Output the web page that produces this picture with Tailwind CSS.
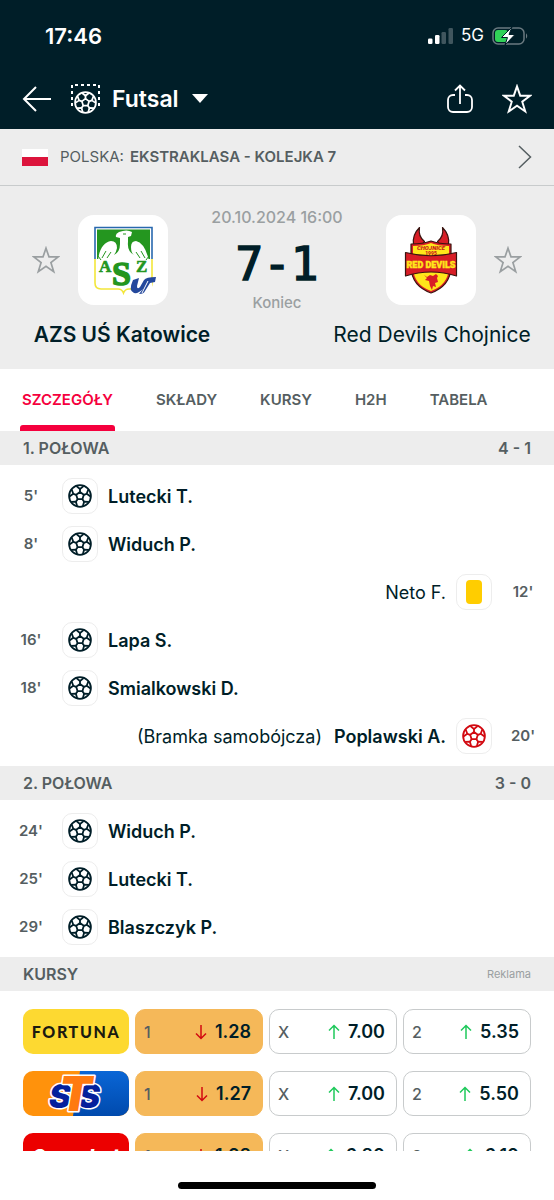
<!DOCTYPE html>
<html lang="pl">

<head>
    <meta charset="UTF-8">
    <meta name="viewport" content="width=device-width, initial-scale=1.0">
    <title>AZS UŚ Katowice - Red Devils Chojnice</title>
    <script src="https://cdn.jsdelivr.net/npm/@tailwindcss/browser@4"></script>
</head>

<body class="h-screen flex flex-col bg-white font-['Inter','Noto_Sans',sans-serif] text-[#001e28]">
    <svg class="hidden">
        <symbol id="ball" viewBox="0 0 24 24" fill="none" stroke="currentColor" stroke-width="1.8" stroke-linejoin="round">
            <circle cx="12" cy="12" r="10.9" />
            <path d="M12 8l3.8 2.8-1.4 4.4H9.6l-1.4-4.4z" />
            <path d="M12 8V5M15.8 10.8l2.9-1M14.4 15.2l1.7 2.5M9.6 15.2l-1.7 2.5M8.2 10.8l-2.9-1" />
            <path d="M8.4 2.1 12 5l3.6-2.9M20.3 5.5l-1.6 4.3 3.8 2.6M20.7 17.9l-4.6-.2-1.2 4.4M9.1 22.1l-1.2-4.4-4.6.2M1.5 12.4l3.8-2.6-1.6-4.3" />
        </symbol>
        <symbol id="star" viewBox="0 0 28 28" fill="none" stroke="currentColor" stroke-linejoin="miter">
            <path d="M14 2.2l3 8.7h9.2l-7.3 5.6 2.8 9.1-7.7-5.4-7.7 5.4 2.8-9.1-7.3-5.6H11z" />
        </symbol>
        <symbol id="up" viewBox="0 0 12 16" fill="none" stroke="currentColor" stroke-width="1.5">
            <path d="M6 15V2M1 6.500l5-5 5 5" />
        </symbol>
        <symbol id="down" viewBox="0 0 12 16" fill="none" stroke="currentColor" stroke-width="1.5">
            <path d="M6 1v13M1 9.500l5 5 5-5" />
        </symbol>
    </svg>

    <header class="shrink-0 bg-[#001e28] text-white">
        <div class="h-[68px] pl-[45px] pr-[26px] pt-1 flex justify-between items-center">
            <span class="text-[22px] font-semibold">17:46</span>
            <div class="flex items-center gap-2">
                <svg class="w-[25px] h-4" viewBox="0 0 25 16" fill="currentColor">
                    <rect x="0" y="10.500" width="4.500" height="5.500" rx="1.300" />
                    <rect x="7" y="7" width="4.500" height="9" rx="1.300" />
                    <rect x="13.500" y="4" width="4.500" height="12" rx="1.300" opacity=".25" />
                    <rect x="20.500" y="0" width="4.500" height="16" rx="1.300" opacity=".25" />
                </svg>
                <span class="text-[17px]">5G</span>
                <svg class="w-9 h-5" viewBox="0 0 36 20">
                    <rect x="1" y="2" width="31" height="16" rx="5" fill="none" stroke="#6a7a80" stroke-width="1.500" />
                    <path d="M34 7.500c1.600.5 1.600 4.500 0 5z" fill="#6a7a80" />
                    <rect x="3" y="4" width="13" height="12" rx="3" fill="#30d158" />
                    <path d="M20 1 9.500 11.500h6L13 19l10-10.500h-6L20 1z" fill="#fff" stroke="#001e28" stroke-width="1" />
                </svg>
            </div>
        </div>
        <nav class="h-[61px] px-[22px] flex items-center">
            <button type="button" aria-label="Wstecz">
                <svg class="w-[30px] h-7" viewBox="0 0 30 28" fill="none" stroke="currentColor" stroke-width="2">
                    <path d="M29 14H2M14 2 2 14l12 12" />
                </svg>
            </button>
            <label for="sport" class="ml-[18px]">
                <svg class="w-[30px] h-[30px]" viewBox="0 0 30 30" role="img" aria-label="Sport">
                    <path d="M2 22V1h27v21" fill="none" stroke="#fff" stroke-width="2" stroke-dasharray="3 3" />
                    <use href="#ball" x="4" y="7" width="23" height="23" color="#fff" />
                </svg>
            </label>
            <select id="sport" class="h-9 ml-3 appearance-none bg-transparent text-[23px] leading-9 font-semibold">
                <option>Futsal</option>
            </select>
            <svg class="w-4 h-[9px] ml-[13px]" viewBox="0 0 16 9" fill="currentColor">
                <path d="M0 0h16L8 9z" />
            </svg>
            <button type="button" aria-label="Udostępnij" class="ml-auto">
                <svg class="w-7 h-[30px]" viewBox="0 0 28 30" fill="none" stroke="currentColor" stroke-width="1.800">
                    <path d="M9 11H7a5 5 0 0 0-5 5v7a5 5 0 0 0 5 5h14a5 5 0 0 0 5-5v-7a5 5 0 0 0-5-5h-2M14 20V2M9 6.500l5-5 5 5" />
                </svg>
            </button>
            <button type="button" aria-label="Dodaj do ulubionych" class="ml-7">
                <svg class="w-[30px] h-[30px]" stroke-width="1.800"><use href="#star" /></svg>
            </button>
        </nav>
    </header>

    <main class="flex-1 min-h-0 overflow-hidden">
        <a href="#" class="h-[57px] px-[22px] flex items-center bg-[#ededed] border-b border-[#c8cbcc] text-[15px] text-[#555e61]">
            <span class="w-[26px] h-[17px] mr-3 bg-[linear-gradient(#fff_50%,#dc143c_50%)]"></span>
            <span>POLSKA:</span>
            <b class="ml-[6px] font-semibold">EKSTRAKLASA - KOLEJKA 7</b>
            <svg class="w-[14px] h-6 ml-auto" viewBox="0 0 14 24" fill="none" stroke="currentColor" stroke-width="1.500">
                <path d="M1 1l11.500 11L1 23" />
            </svg>
        </a>

        <section class="bg-[#ededed] pt-[21px] pb-[22px]">
            <div class="px-8 flex justify-between items-center">
                <button type="button" aria-label="Obserwuj AZS UŚ Katowice" class="text-[#9a9fa1]">
                    <svg class="w-7 h-7" stroke-width="1.700"><use href="#star" /></svg>
                </button>
                <div class="w-[90px] h-[90px] ml-[18px] rounded-[16px] bg-white">
                    <svg class="w-[90px] h-[90px]" viewBox="0 0 90 90">
                        <path d="M17 44V12.500h57V44" fill="#fff" stroke="#2868ae" stroke-width="1.600" />
                        <path d="M19 14.500h53V46H19z" fill="#24961f" />
                        <path d="M17 44v24q0 6 6 6h17q4 0 5.500 4 1.500-4 5.500-4h17q6 0 6-6V44" fill="#fff" stroke="#f3e63a" stroke-width="1.600" />
                        <path d="M19 44h53v4H19z" fill="#fff" />
                        <path d="M20 46C21 34 26 27 33 26q6 0 6 7-1 5-3 7 6-3 6-11v-6l-4-1q-1-3 3-5 8-3 13 0l-1 4-3 1v5q-1 9 6 13-3-2-3-8 0-6 5-6 9 2 13 20l-5-2-1 4-5-3-4 4-5-3-6 6-6-6-5 3-4-4-5 3-1-4z" fill="#fff" />
                        <path d="M20 41l3 4M24 43l4-7M29 43l4-6M71 41l-3 4M67 43l-4-7M62 43l-4-6" stroke="#24961f" stroke-width="1" />
                        <path d="M45 19h3" stroke="#24961f" />
                        <g fill="#24961f" stroke="#24961f" stroke-width=".6" font-family="Liberation Serif, serif" font-weight="bold">
                            <text x="21" y="57" font-size="17">A</text>
                            <text x="58" y="57" font-size="17">Z</text>
                            <text x="34" y="70" font-size="34" stroke-width="1.500">S</text>
                        </g>
                        <path d="M54 63h20v16H54z" fill="#fff" />
                        <path d="M55 65l6-2-2 8q0 4 3 1l4-7q2-3 12-3l-1 5-5 1-5 8q-1 3-6 3l4-5q-5 5-9 4-6-2-1-13z" fill="#24489c" />
                        <path d="M64 78l6-12" stroke="#fff" />
                    </svg>
                </div>
                <div class="flex-1 h-[106px] flex flex-col items-center text-[#9a9fa1] text-[16px] leading-5 font-medium whitespace-nowrap">
                    <time>20.10.2024 16:00</time>
                    <strong class="pt-2 font-['DejaVu_Sans_Mono',monospace] font-normal text-[46px] leading-[58px] text-[#001e28] [-webkit-text-stroke:1.5px_#001e28]">7-1</strong>
                    <span class="text-[15px]">Koniec</span>
                </div>
                <div class="w-[90px] h-[90px] mr-[18px] rounded-[16px] bg-white">
                    <svg class="w-[90px] h-[90px]" viewBox="0 0 90 90">
                        <g stroke="#3a1410" stroke-width="1.200" stroke-linejoin="round">
                            <path d="M33.500 12.500c-5 5-7 10-6 17h9l2-3c-4-3-6-8-5-14zM56.500 12.500c5 5 7 10 6 17h-9l-2-3c4-3 6-8 5-14z" fill="#d81d26" />
                            <path d="M25 29q12 0 20-3 8 3 20 3v24q-1 18-20 25-19-7-20-25z" fill="#d81d26" />
                            <path d="M27 31q11 0 18-3 7 3 18 3v22q-1 17-18 23-17-6-18-23z" fill="#ffe61a" stroke="none" />
                            <path d="M19.500 37.500Q45 44 70.500 37.500V61Q45 53 19.500 61z" fill="#d81d26" />
                        </g>
                        <g text-anchor="middle" font-family="Roboto, sans-serif" font-weight="900" fill="#c9161d">
                            <text x="45" y="35" font-size="6" font-style="italic">CHOJNICE</text>
                            <text x="45" y="40" font-size="5">1995</text>
                        </g>
                        <text x="45" y="53" font-size="9" font-weight="900" text-anchor="middle" font-family="Liberation Sans Narrow, Roboto, sans-serif" fill="#ffe61a" stroke="#ffe61a" stroke-width=".4">RED DEVILS</text>
                        <path d="M38 60l3 2 3-2 3 1 3-2 2 2-1 2 1 4-3 1 1 4-3-1-1 4-2-4-1-5-4-1 2-2z" fill="#d81d26" />
                    </svg>
                </div>
                <button type="button" aria-label="Obserwuj Red Devils Chojnice" class="text-[#9a9fa1]">
                    <svg class="w-7 h-7" stroke-width="1.700"><use href="#star" /></svg>
                </button>
            </div>
            <div class="px-[22px] mt-[10px] flex justify-between text-[21px] leading-6 text-center whitespace-nowrap">
                <span class="w-[200px] font-semibold">AZS UŚ Katowice</span>
                <span class="w-[200px]">Red Devils Chojnice</span>
            </div>
        </section>

        <nav class="h-[62px] px-5 flex gap-[39px] text-[15px] font-semibold text-[#555e61]">
            <a href="#" class="px-0.5 flex items-center relative text-[#f5003d]">SZCZEGÓŁY
                <span class="absolute inset-x-0 bottom-0 h-[6px] rounded-t-[3px] bg-[#f5003d]"></span>
            </a>
            <a href="#" class="px-0.5 flex items-center">SKŁADY</a>
            <a href="#" class="px-0.5 flex items-center">KURSY</a>
            <a href="#" class="px-0.5 flex items-center">H2H</a>
            <a href="#" class="px-0.5 flex items-center">TABELA</a>
        </nav>

        <h2 class="h-[34px] px-[23px] flex justify-between items-center bg-[#ededed] text-[16px] font-semibold text-[#555e61]"><span>1. POŁOWA</span><span>4 - 1</span></h2>
        <ul class="px-[18px] pt-[7px] pb-[6px] text-[18px] font-semibold">
            <li class="h-12 flex items-center gap-[10px]">
                <span class="w-[26px] mr-2 text-center text-[15px] text-[#555e61]">5'</span>
                <span class="w-9 h-9 flex justify-center items-center rounded-[10px] border border-[#ededed]"><svg class="w-6 h-6"><use href="#ball" /></svg></span>
                <span>Lutecki T.</span>
            </li>
            <li class="h-12 flex items-center gap-[10px]">
                <span class="w-[26px] mr-2 text-center text-[15px] text-[#555e61]">8'</span>
                <span class="w-9 h-9 flex justify-center items-center rounded-[10px] border border-[#ededed]"><svg class="w-6 h-6"><use href="#ball" /></svg></span>
                <span>Widuch P.</span>
            </li>
            <li class="h-12 flex flex-row-reverse items-center gap-[10px]">
                <span class="w-[26px] ml-2 text-center text-[15px] text-[#555e61]">12'</span>
                <span class="w-9 h-9 flex justify-center items-center rounded-[10px] border border-[#ededed]"><span class="w-4 h-6 rounded-[4px] bg-[#ffcd00]"></span></span>
                <span class="font-normal">Neto F.</span>
            </li>
            <li class="h-12 flex items-center gap-[10px]">
                <span class="w-[26px] mr-2 text-center text-[15px] text-[#555e61]">16'</span>
                <span class="w-9 h-9 flex justify-center items-center rounded-[10px] border border-[#ededed]"><svg class="w-6 h-6"><use href="#ball" /></svg></span>
                <span>Lapa S.</span>
            </li>
            <li class="h-12 flex items-center gap-[10px]">
                <span class="w-[26px] mr-2 text-center text-[15px] text-[#555e61]">18'</span>
                <span class="w-9 h-9 flex justify-center items-center rounded-[10px] border border-[#ededed]"><svg class="w-6 h-6"><use href="#ball" /></svg></span>
                <span>Smialkowski D.</span>
            </li>
            <li class="h-12 flex flex-row-reverse items-center gap-[10px]">
                <span class="w-[26px] ml-2 text-center text-[15px] text-[#555e61]">20'</span>
                <span class="w-9 h-9 flex justify-center items-center rounded-[10px] border border-[#ededed] text-[#d20a11]"><svg class="w-6 h-6"><use href="#ball" /></svg></span>
                <span><span class="mr-3 font-normal">(Bramka samobójcza)</span>Poplawski A.</span>
            </li>
        </ul>

        <h2 class="h-[34px] px-[23px] flex justify-between items-center bg-[#ededed] text-[16px] font-semibold text-[#555e61]"><span>2. POŁOWA</span><span>3 - 0</span></h2>
        <ul class="px-[18px] pt-[7px] pb-[6px] text-[18px] font-semibold">
            <li class="h-12 flex items-center gap-[10px]">
                <span class="w-[26px] mr-2 text-center text-[15px] text-[#555e61]">24'</span>
                <span class="w-9 h-9 flex justify-center items-center rounded-[10px] border border-[#ededed]"><svg class="w-6 h-6"><use href="#ball" /></svg></span>
                <span>Widuch P.</span>
            </li>
            <li class="h-12 flex items-center gap-[10px]">
                <span class="w-[26px] mr-2 text-center text-[15px] text-[#555e61]">25'</span>
                <span class="w-9 h-9 flex justify-center items-center rounded-[10px] border border-[#ededed]"><svg class="w-6 h-6"><use href="#ball" /></svg></span>
                <span>Lutecki T.</span>
            </li>
            <li class="h-12 flex items-center gap-[10px]">
                <span class="w-[26px] mr-2 text-center text-[15px] text-[#555e61]">29'</span>
                <span class="w-9 h-9 flex justify-center items-center rounded-[10px] border border-[#ededed]"><svg class="w-6 h-6"><use href="#ball" /></svg></span>
                <span>Blaszczyk P.</span>
            </li>
        </ul>

        <h2 class="h-[34px] px-[23px] flex justify-between items-center bg-[#ededed] text-[16px] font-semibold text-[#555e61]"><span>KURSY</span><span class="text-[11px] font-normal text-[#9a9fa1]">Reklama</span></h2>
        <div class="px-[23px] pt-[18px] grid grid-cols-[106px_1fr_1fr_1fr] auto-rows-[45px] gap-x-[6px] gap-y-[17px] text-[18px] font-semibold">
            <a href="#" class="flex justify-center items-center rounded-[10px] bg-[#fdd931] font-['Lato',sans-serif] text-[16px] font-black tracking-widest text-[#1a1a10]">FORTUNA</a>
            <button type="button" class="pl-2 pr-[11px] flex items-center rounded-[10px] border border-[#f5b859] bg-[#f5b859]"><span class="mr-auto text-[16px] font-medium text-[#555e61]">1</span><svg class="w-3 h-4 mr-2 text-[#d20a11]"><use href="#down" /></svg>1.28</button>
            <button type="button" class="pl-2 pr-[11px] flex items-center rounded-[10px] border border-[#c8cbcc]"><span class="mr-auto text-[16px] font-medium text-[#555e61]">X</span><svg class="w-3 h-4 mr-2 text-[#1fc95b]"><use href="#up" /></svg>7.00</button>
            <button type="button" class="pl-2 pr-[11px] flex items-center rounded-[10px] border border-[#c8cbcc]"><span class="mr-auto text-[16px] font-medium text-[#555e61]">2</span><svg class="w-3 h-4 mr-2 text-[#1fc95b]"><use href="#up" /></svg>5.35</button>

            <a href="#" aria-label="STS" class="rounded-[10px] overflow-hidden">
                <svg class="w-[106px] h-[45px]" viewBox="0 0 106 45">
                    <defs>
                        <linearGradient id="sts-blue" x2="0" y2="1"><stop stop-color="#0a66d6" /><stop offset="1" stop-color="#004aad" /></linearGradient>
                    </defs>
                    <path d="M0 0h106v45H0z" fill="#ff920c" />
                    <path d="M57 0h49v45H50z" fill="url(#sts-blue)" />
                    <g font-family="Inter, sans-serif" font-weight="900" font-style="italic" stroke="#fff" stroke-width="3" stroke-linejoin="round" paint-order="stroke">
                        <text x="26" y="37" font-size="33" fill="#04209c">S</text>
                        <text x="55" y="37" font-size="33" fill="#04209c">S</text>
                        <text x="36" y="40" font-size="48" fill="#ff7a10">T</text>
                    </g>
                </svg>
            </a>
            <button type="button" class="pl-2 pr-[11px] flex items-center rounded-[10px] border border-[#f5b859] bg-[#f5b859]"><span class="mr-auto text-[16px] font-medium text-[#555e61]">1</span><svg class="w-3 h-4 mr-2 text-[#d20a11]"><use href="#down" /></svg>1.27</button>
            <button type="button" class="pl-2 pr-[11px] flex items-center rounded-[10px] border border-[#c8cbcc]"><span class="mr-auto text-[16px] font-medium text-[#555e61]">X</span><svg class="w-3 h-4 mr-2 text-[#1fc95b]"><use href="#up" /></svg>7.00</button>
            <button type="button" class="pl-2 pr-[11px] flex items-center rounded-[10px] border border-[#c8cbcc]"><span class="mr-auto text-[16px] font-medium text-[#555e61]">2</span><svg class="w-3 h-4 mr-2 text-[#1fc95b]"><use href="#up" /></svg>5.50</button>

            <a href="#" class="pt-1 flex justify-center items-center rounded-[10px] bg-[#ec0000] text-[19px] font-extrabold italic text-white">Superbet</a>
            <button type="button" class="pl-2 pr-[11px] flex items-center rounded-[10px] border border-[#f5b859] bg-[#f5b859]"><span class="mr-auto text-[16px] font-medium text-[#555e61]">1</span><svg class="w-3 h-4 mr-2 text-[#d20a11]"><use href="#down" /></svg>1.28</button>
            <button type="button" class="pl-2 pr-[11px] flex items-center rounded-[10px] border border-[#c8cbcc]"><span class="mr-auto text-[16px] font-medium text-[#555e61]">X</span><svg class="w-3 h-4 mr-2 text-[#1fc95b]"><use href="#up" /></svg>6.80</button>
            <button type="button" class="pl-2 pr-[11px] flex items-center rounded-[10px] border border-[#c8cbcc]"><span class="mr-auto text-[16px] font-medium text-[#555e61]">2</span><svg class="w-3 h-4 mr-2 text-[#1fc95b]"><use href="#up" /></svg>6.10</button>
        </div>
    </main>

    <footer class="shrink-0 h-[49px] pb-[11px] flex justify-center items-end">
        <div class="w-[198px] h-[7px] rounded-full bg-black"></div>
    </footer>
</body>

</html>
